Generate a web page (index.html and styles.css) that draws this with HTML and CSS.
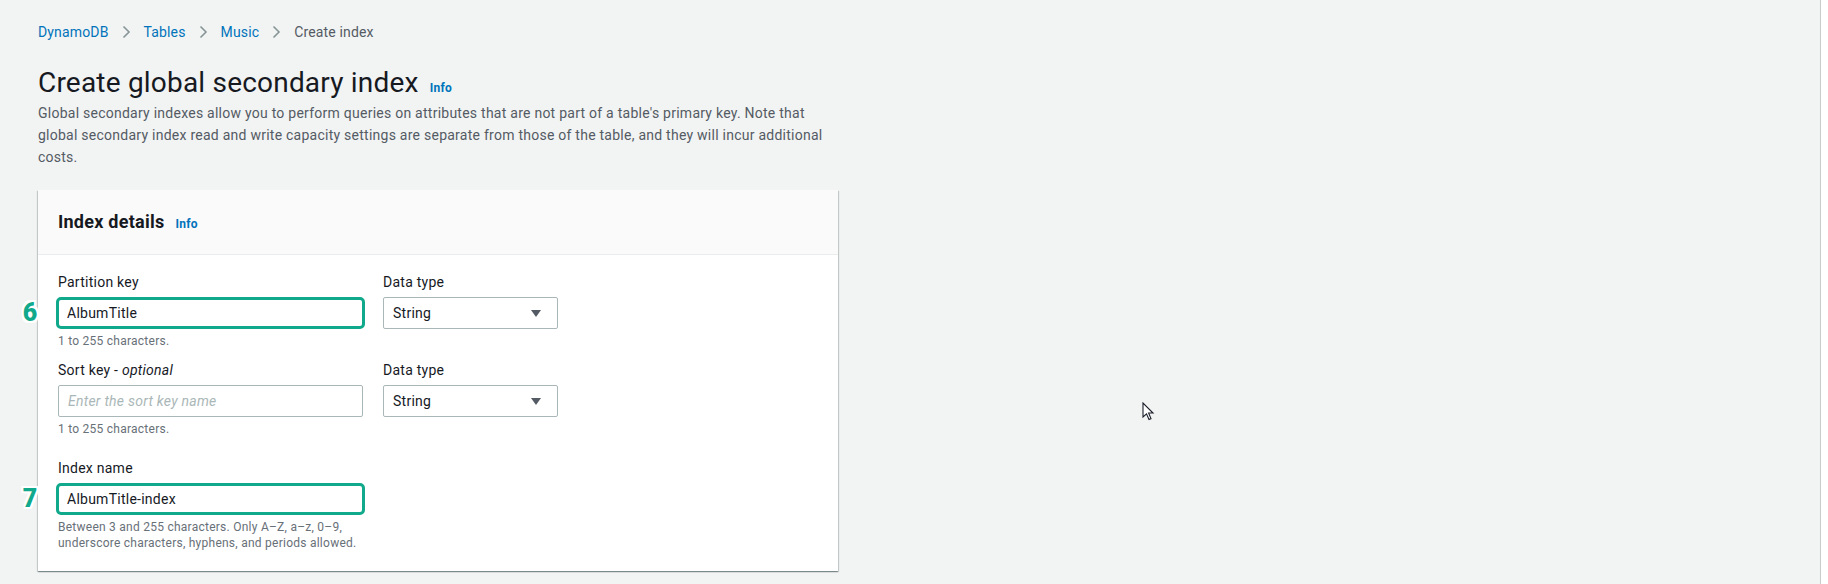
FILE: index.html
```html
<!DOCTYPE html>
<html lang="en">
<head>
<meta charset="utf-8">
<title>Create global secondary index</title>
<link rel="stylesheet" href="styles.css">
</head>
<body>
<div class="frame">
  <main class="page">
    <nav class="crumbs">
      <a class="crumb-link">DynamoDB</a>
      <span class="chev"><svg width="9" height="14" viewBox="0 0 9 14"><path d="M1.5 1.5 L7 7 L1.5 12.5" fill="none" stroke="#879596" stroke-width="1.6"/></svg></span>
      <a class="crumb-link">Tables</a>
      <span class="chev"><svg width="9" height="14" viewBox="0 0 9 14"><path d="M1.5 1.5 L7 7 L1.5 12.5" fill="none" stroke="#879596" stroke-width="1.6"/></svg></span>
      <a class="crumb-link">Music</a>
      <span class="chev"><svg width="9" height="14" viewBox="0 0 9 14"><path d="M1.5 1.5 L7 7 L1.5 12.5" fill="none" stroke="#879596" stroke-width="1.6"/></svg></span>
      <span class="crumb-current">Create index</span>
    </nav>

    <header class="page-head">
      <div class="title-row">
        <h1 class="title">Create global secondary index</h1>
        <a class="info">Info</a>
      </div>
      <p class="desc">Global secondary indexes allow you to perform queries on attributes that are not part of a table's primary key. Note that global secondary index read and write capacity settings are separate from those of the table, and they will incur additional costs.</p>
    </header>

    <section class="card">
      <div class="card-head">
        <h2 class="card-title">Index details</h2>
        <a class="info">Info</a>
      </div>
      <div class="card-body">
        <div class="row">
          <div class="field field-wide">
            <label class="label">Partition key</label>
            <div class="input-wrap">
              <span class="step">6</span>
              <div class="input highlighted">AlbumTitle</div>
            </div>
            <div class="hint">1 to 255 characters.</div>
          </div>
          <div class="field field-narrow">
            <label class="label">Data type</label>
            <div class="select"><span>String</span><span class="caret"></span></div>
          </div>
        </div>

        <div class="row row-gap-s">
          <div class="field field-wide">
            <label class="label">Sort key - <em>optional</em></label>
            <div class="input placeholder">Enter the sort key name</div>
            <div class="hint">1 to 255 characters.</div>
          </div>
          <div class="field field-narrow">
            <label class="label">Data type</label>
            <div class="select"><span>String</span><span class="caret"></span></div>
          </div>
        </div>

        <div class="row row-gap-l">
          <div class="field field-wide">
            <label class="label">Index name</label>
            <div class="input-wrap">
              <span class="step">7</span>
              <div class="input highlighted">AlbumTitle-index</div>
            </div>
            <div class="hint">Between 3 and 255 characters. Only A–Z, a–z, 0–9, underscore characters, hyphens, and periods allowed.</div>
          </div>
        </div>
      </div>
    </section>

    <svg class="cursor" width="13" height="20" viewBox="0 0 13 20"><path d="M1 1 L1 15 L4.5 11.8 L7 17.5 L9 16.6 L6.6 11 L11 11 Z" fill="#fff" stroke="#1b1f2a" stroke-width="1.1" stroke-linejoin="miter"/></svg>
  </main>
  <aside class="edge"></aside>
</div>
</body>
</html>
```
FILE: styles.css
```css
* { box-sizing: border-box; }
html, body { margin: 0; padding: 0; }
body {
  background: #f2f3f3;
  font-family: Roboto, "Liberation Sans", Arial, sans-serif;
  color: #16191f;
  font-size: 14px;
  line-height: 22px;
  letter-spacing: 0.25px;
}
.frame {
  display: flex;
  height: 584px;
  overflow: hidden;
}
.page {
  position: relative;
  flex: 1;
  padding: 21px 0 0 38px;
}
.edge {
  width: 8px;
  background: #fff;
  border-left: 1px solid #c6cbcb;
}
.crumbs {
  display: flex;
  align-items: center;
  gap: 13px;
  height: 22px;
  letter-spacing: 0.15px;
}
.crumb-link { color: #0073bb; }
.crumb-current { color: #545b64; }
.chev { display: flex; align-items: center; }

.page-head { margin-top: 22px; width: 800px; }
.title-row { display: flex; align-items: baseline; gap: 11px; }
.title {
  margin: 0;
  font-size: 28px;
  font-weight: 400;
  line-height: 36px;
  color: #16191f;
  letter-spacing: 0.2px;
}
.info {
  color: #0073bb;
  font-size: 12px;
  font-weight: 700;
}
.desc {
  margin: 1px 0 0;
  color: #545b64;
  font-size: 14px;
  line-height: 22px;
}

.card {
  margin-top: 22px;
  width: 800px;
  background: #fff;
  box-shadow: 0 1px 1px 0 rgba(0,28,36,.3), 1px 1px 1px 0 rgba(0,28,36,.15), -1px 1px 1px 0 rgba(0,28,36,.15);
}
.card-head {
  display: flex;
  align-items: baseline;
  gap: 11px;
  padding: 19px 20px 19px;
  background: #fafafa;
  border-bottom: 1px solid #eaeded;
}
.card-title {
  margin: 0;
  font-size: 18px;
  font-weight: 700;
  line-height: 26px;
}
.card-body { padding: 16px 20px 20px; }
.row { display: flex; gap: 20px; }
.row-gap-s { margin-top: 10px; }
.row-gap-l { margin-top: 20px; }
.field { display: flex; flex-direction: column; }
.field-wide { width: 305px; }
.field-narrow { width: 175px; }
.label {
  font-size: 14px;
  line-height: 22px;
  margin-bottom: 4px;
  color: #16191f;
}
.label em { font-style: italic; }
.input-wrap { position: relative; }
.input {
  height: 32px;
  border: 1px solid #aab7b8;
  border-radius: 2px;
  padding: 0 9px;
  display: flex;
  align-items: center;
  font-size: 14px;
  color: #16191f;
  background: #fff;
}
.input.highlighted {
  border: 3px solid #11a98b;
  border-radius: 5px;
  margin: 0 -2px;
  padding: 0 8px;
}
.input.placeholder { color: #aab7b8; font-style: italic; }
.step {
  position: absolute;
  left: -43px;
  top: 0;
  height: 32px;
  width: 30px;
  display: flex;
  align-items: center;
  justify-content: center;
  font-size: 25px;
  font-weight: 900;
  color: #11a98b;
  text-shadow: 2px 0 0 #fff, -2px 0 0 #fff, 0 2px 0 #fff, 0 -2px 0 #fff, 2px 2px 0 #fff, -2px -2px 0 #fff, 2px -2px 0 #fff, -2px 2px 0 #fff;
}
.hint {
  margin-top: 4px;
  font-size: 12px;
  line-height: 16px;
  color: #687078;
}
.select {
  height: 32px;
  border: 1px solid #aab7b8;
  border-radius: 2px;
  padding: 0 16px 0 9px;
  display: flex;
  align-items: center;
  justify-content: space-between;
  font-size: 14px;
  background: #fff;
}
.caret {
  width: 0; height: 0;
  border-left: 5px solid transparent;
  border-right: 5px solid transparent;
  border-top: 7px solid #545b64;
}
.cursor {
  position: absolute;
  left: 1142px;
  top: 402px;
}
```
